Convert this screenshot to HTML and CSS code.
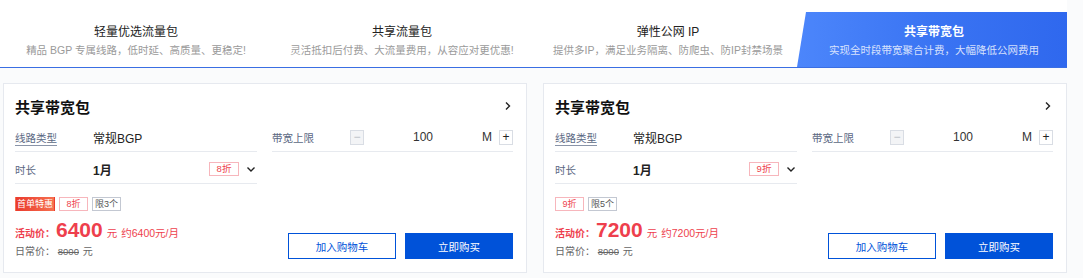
FILE: index.html
```html
<!DOCTYPE html>
<html lang="zh-CN">
<head>
    <meta charset="UTF-8">
    <meta name="viewport" content="width=device-width, initial-scale=1.0">
    <title>共享带宽包</title>
    <link rel="stylesheet" href="styles.css">
</head>
<body>
    <div class="page">
        <div class="tabs">
            <div class="tab">
                <div class="tab-title">轻量优选流量包</div>
                <div class="tab-desc">精品 BGP 专属线路，低时延、高质量、更稳定!</div>
            </div>
            <div class="tab">
                <div class="tab-title">共享流量包</div>
                <div class="tab-desc">灵活抵扣后付费、大流量费用，从容应对更优惠!</div>
            </div>
            <div class="tab">
                <div class="tab-title">弹性公网 IP</div>
                <div class="tab-desc">提供多IP，满足业务隔离、防爬虫、防IP封禁场景</div>
            </div>
            <div class="tab active">
                <div class="tab-title">共享带宽包</div>
                <div class="tab-desc">实现全时段带宽聚合计费，大幅降低公网费用</div>
            </div>
        </div>

        <div class="cards">
            <div class="card">
                <div class="card-head">
                    <span class="card-title">共享带宽包</span>
                    <svg class="arrow-right" width="8" height="10" viewBox="0 0 8 10"><path d="M2 1.5 L5.5 5 L2 8.5" fill="none" stroke="#222" stroke-width="1.4"/></svg>
                </div>
                <div class="fields">
                    <div class="col">
                        <div class="row">
                            <span class="label underline">线路类型</span>
                            <span class="value">常规BGP</span>
                        </div>
                        <div class="row">
                            <span class="label">时长</span>
                            <span class="value bold">1月</span>
                            <span class="badge">8折</span>
                            <svg class="arrow-down" width="10" height="8" viewBox="0 0 10 8"><path d="M1.5 2.5 L5 6 L8.5 2.5" fill="none" stroke="#222" stroke-width="1.4"/></svg>
                        </div>
                    </div>
                    <div class="col">
                        <div class="row">
                            <span class="label">带宽上限</span>
                            <span class="step-btn disabled">−</span>
                            <span class="step-num">100</span>
                            <span class="step-unit">M</span>
                            <span class="step-btn">+</span>
                        </div>
                    </div>
                </div>
                <div class="card-foot">
                    <div class="price-box">
                        <div class="tags">
                            <span class="tag hot">首单特惠</span>
                            <span class="tag discount">8折</span>
                            <span class="tag limit">限3个</span>
                        </div>
                        <div class="price">
                            <span class="price-label">活动价：</span>
                            <span class="price-num">6400</span>
                            <span class="price-unit">元</span>
                            <span class="price-month">约6400元/月</span>
                        </div>
                        <div class="old-price">
                            <span>日常价：</span>
                            <s>8000</s>
                            <span>元</span>
                        </div>
                    </div>
                    <div class="actions">
                        <button class="btn btn-outline">加入购物车</button>
                        <button class="btn btn-primary">立即购买</button>
                    </div>
                </div>
            </div>

            <div class="card">
                <div class="card-head">
                    <span class="card-title">共享带宽包</span>
                    <svg class="arrow-right" width="8" height="10" viewBox="0 0 8 10"><path d="M2 1.5 L5.5 5 L2 8.5" fill="none" stroke="#222" stroke-width="1.4"/></svg>
                </div>
                <div class="fields">
                    <div class="col">
                        <div class="row">
                            <span class="label underline">线路类型</span>
                            <span class="value">常规BGP</span>
                        </div>
                        <div class="row">
                            <span class="label">时长</span>
                            <span class="value bold">1月</span>
                            <span class="badge">9折</span>
                            <svg class="arrow-down" width="10" height="8" viewBox="0 0 10 8"><path d="M1.5 2.5 L5 6 L8.5 2.5" fill="none" stroke="#222" stroke-width="1.4"/></svg>
                        </div>
                    </div>
                    <div class="col">
                        <div class="row">
                            <span class="label">带宽上限</span>
                            <span class="step-btn disabled">−</span>
                            <span class="step-num">100</span>
                            <span class="step-unit">M</span>
                            <span class="step-btn">+</span>
                        </div>
                    </div>
                </div>
                <div class="card-foot">
                    <div class="price-box">
                        <div class="tags">
                            <span class="tag discount">9折</span>
                            <span class="tag limit">限5个</span>
                        </div>
                        <div class="price">
                            <span class="price-label">活动价：</span>
                            <span class="price-num">7200</span>
                            <span class="price-unit">元</span>
                            <span class="price-month">约7200元/月</span>
                        </div>
                        <div class="old-price">
                            <span>日常价：</span>
                            <s>8000</s>
                            <span>元</span>
                        </div>
                    </div>
                    <div class="actions">
                        <button class="btn btn-outline">加入购物车</button>
                        <button class="btn btn-primary">立即购买</button>
                    </div>
                </div>
            </div>
        </div>
    </div>
</body>
</html>
```

FILE: styles.css
```css
* {
    margin: 0;
    padding: 0;
    box-sizing: border-box;
}

body {
    font-family: "Liberation Sans", "Noto Sans CJK SC", sans-serif;
    background-color: #fafbfc;
    color: #222;
}

.page {
    width: 1064px;
    margin-left: 3px;
}

/* tabs */
.tabs {
    display: flex;
    padding-top: 12px;
    border-bottom: 1px solid #3a6ee3;
    background-color: #fff;
    margin-left: -3px;
    padding-left: 3px;
    width: 1067px;
}

.tab {
    width: 266px;
    height: 55px;
    text-align: center;
    padding-top: 12px;
}

.tab-title {
    font-size: 12px;
    line-height: 16px;
    color: #222;
}

.tab-desc {
    font-size: 10.5px;
    line-height: 14px;
    margin-top: 3px;
    color: #9a9a9a;
}

.tab.active {
    margin-left: -4px;
    padding-left: 4px;
    width: 270px;
    background: linear-gradient(90deg, #4c86fb 0%, #3a74f3 50%, #2f68ee 100%);
    clip-path: polygon(9px 0, 100% 0, 100% 100%, 0 100%);
}

.tab.active .tab-title {
    color: #fff;
    font-weight: bold;
}

.tab.active .tab-desc {
    color: rgba(255, 255, 255, 0.8);
}

/* cards */
.cards {
    display: flex;
    gap: 16px;
    margin-top: 15px;
}

.card {
    width: 524px;
    height: 190px;
    background-color: #fff;
    border: 1px solid #e6e9ef;
    padding: 10px 13px 13px 11px;
    display: flex;
    flex-direction: column;
}

.card-head {
    display: flex;
    justify-content: space-between;
    align-items: center;
    height: 24px;
}

.card-title {
    font-size: 15px;
    font-weight: bold;
    color: #111;
}

.arrow-right {
    margin-right: 1px;
}

.fields {
    display: flex;
    gap: 15px;
    margin-top: 2px;
}

.col {
    width: 242px;
}

.col + .col {
    width: 241px;
}

.row {
    display: flex;
    align-items: center;
    height: 32px;
    padding-top: 3px;
    border-bottom: 1px solid #e7eaef;
}

.label {
    width: 78px;
    font-size: 10.5px;
    color: #5b6883;
}

.label.underline {
    text-decoration: underline;
    text-decoration-color: #8a94a8;
    text-underline-offset: 3px;
}

.value {
    font-size: 12px;
    color: #222;
    flex: 1;
}

.value.bold {
    font-weight: bold;
}

.badge {
    font-size: 9.5px;
    line-height: 12px;
    color: #ee3f4d;
    border: 1px solid #f7b6bc;
    width: 30px;
    text-align: center;
}

.arrow-down {
    margin-left: 7px;
    margin-right: 1px;
}

.step-btn {
    width: 14px;
    height: 15px;
    line-height: 13px;
    font-size: 12px;
    text-align: center;
    border: 1px solid #d9dde4;
    background-color: #fff;
    color: #222;
    margin-left: 1px;
}

.step-btn.disabled {
    background-color: #f3f4f6;
    color: #b9bec7;
    margin-left: 0;
}

.step-num {
    flex: 1;
    text-align: center;
    font-size: 12px;
    color: #333;
}

.step-unit {
    font-size: 12px;
    color: #333;
    margin-right: 6px;
}

/* price and actions */
.card-foot {
    margin-top: auto;
    display: flex;
    justify-content: space-between;
    align-items: flex-end;
}

.price-box {
    white-space: nowrap;
}

.tags {
    display: flex;
    gap: 4px;
    height: 14px;
}

.tag {
    font-size: 9px;
    line-height: 12px;
    padding: 0 2px;
    border: 1px solid transparent;
    text-align: center;
}

.tag.hot {
    padding: 0 1px;
    color: #fff;
    background: linear-gradient(90deg, #ea3b2e, #f6704f);
}

.tag.discount {
    width: 29px;
    color: #ee3f4d;
    border-color: #f7b6bc;
}

.tag.limit {
    color: #555;
    border-color: #c3c8d2;
}

.price {
    display: flex;
    align-items: baseline;
    color: #ee3f4d;
    height: 29px;
    margin-top: 4px;
}

.price-label {
    font-size: 10px;
    font-weight: bold;
    margin-right: 1px;
}

.price-num {
    font-size: 21px;
    font-weight: bold;
    line-height: 29px;
}

.price-unit {
    font-size: 10.5px;
    margin-left: 4px;
}

.price-month {
    font-size: 10.5px;
    margin-left: 4px;
}

.old-price {
    font-size: 10px;
    color: #666;
    height: 15px;
    line-height: 15px;
}

.old-price s {
    font-size: 9.5px;
    margin-right: 1px;
}

.actions {
    display: flex;
    gap: 9px;
}

.btn {
    width: 108px;
    height: 26px;
    font-family: inherit;
    font-size: 10.5px;
    border: 1px solid #0052d9;
    cursor: pointer;
}

.btn-outline {
    background-color: #fff;
    color: #0052d9;
}

.btn-primary {
    background-color: #0052d9;
    color: #fff;
}
```
